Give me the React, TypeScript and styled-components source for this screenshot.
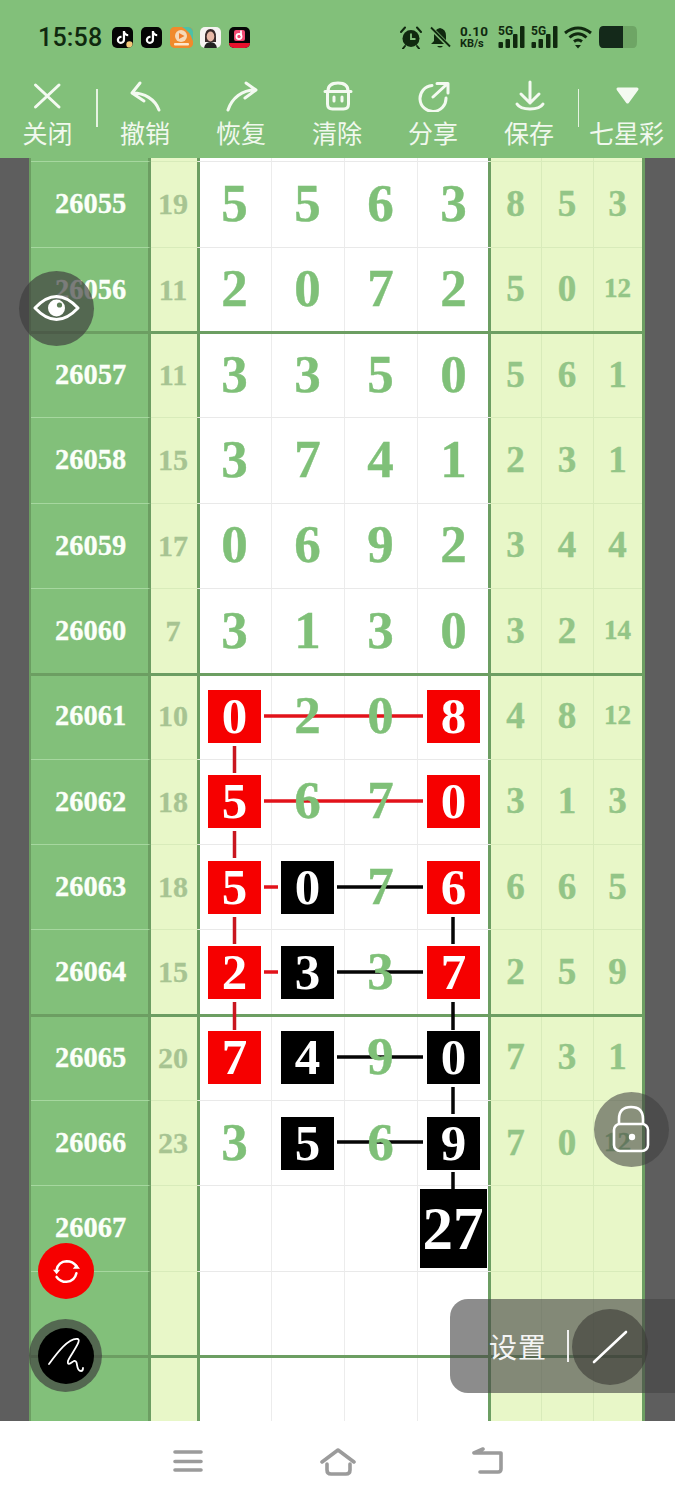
import React from "react";
import styled, { createGlobalStyle } from "styled-components";
import { FaTiktok } from "react-icons/fa6";

const GREEN = "#82c07a";
const RULE = "#6c9e62";
const PALE = "#e8f7c8";
const GRAY = "#5e5e5e";
const SERIF = `"Liberation Serif", "Times New Roman", serif`;
const CJK = `"Noto Sans CJK SC", "Noto Sans", sans-serif`;
const INK = "#10290f";

const Global = createGlobalStyle`
  html, body { margin: 0; padding: 0; background: #fff; }
  * { box-sizing: border-box; }
`;

const Page = styled.div`
  position: relative;
  width: 675px;
  height: 1500px;
  overflow: hidden;
  display: flex;
  flex-direction: column;
  background: #fff;
`;

const Header = styled.header`
  height: 158px;
  background: ${GREEN};
  display: flex;
  flex-direction: column;
`;

const StatusBar = styled.div`
  height: 72px;
  padding: 2px 37px 0 38px;
  display: flex;
  align-items: center;
`;

const Clock = styled.span`
  font: 500 25px/1 Roboto, sans-serif;
  color: ${INK};
  width: 74px;
  letter-spacing: 0.2px;
`;

const AppIcons = styled.div`
  display: flex;
  gap: 8px;
`;

const AppIcon = styled.div<{ $bg: string; $wide?: boolean }>`
  position: relative;
  width: ${(p) => (p.$wide ? 23 : 21)}px;
  height: 21px;
  margin-right: ${(p) => (p.$wide ? -1 : 0)}px;
  border-radius: 5px;
  background: ${(p) => p.$bg};
  display: flex;
  align-items: center;
  justify-content: center;
  overflow: hidden;
  color: #fff;
  font-size: 13px;
`;

const Indicators = styled.div`
  margin-left: auto;
  display: flex;
  align-items: center;
  color: ${INK};
`;

const Speed = styled.div`
  width: 27px;
  margin: 0 11px 0 9px;
  display: flex;
  flex-direction: column;
  font-family: Roboto, sans-serif;
  font-weight: 700;
  white-space: nowrap;
`;

const SpeedValue = styled.span`
  font-size: 13.5px;
  line-height: 13px;
  letter-spacing: 0.3px;
`;

const SpeedUnit = styled.span`
  font-size: 11px;
  line-height: 11px;
`;

const Toolbar = styled.nav`
  height: 86px;
  display: grid;
  grid-template-columns: 96px 1.5px 96px 96px 96px 96px 96px 1.5px 1fr;
  padding-top: 8px;
`;

const ToolItem = styled.div`
  display: flex;
  flex-direction: column;
  align-items: center;
  color: #f1f8ee;
`;

const ToolIcon = styled.svg`
  width: 36px;
  height: 32px;
  fill: none;
  stroke: #f4faf1;
  stroke-width: 3;
  stroke-linecap: round;
  stroke-linejoin: round;
`;

const ToolLabel = styled.span`
  margin-top: 5px;
  margin-right: 1px;
  font: 400 25px/30px ${CJK};
  white-space: nowrap;
`;

const ToolDivider = styled.div`
  width: 1.5px;
  height: 38px;
  margin-top: 9px;
  background: #e6f3e2;
`;

const Board = styled.main`
  height: 1263px;
  display: flex;
  background: ${GRAY};
`;

const Gutter = styled.div<{ $w: number }>`
  width: ${(p) => p.$w}px;
  flex: none;
`;

const Table = styled.div`
  position: relative;
  isolation: isolate;
  width: 616px;
  flex: none;
  overflow: hidden;
  border-left: 2px solid ${RULE};
  border-right: 3px solid ${RULE};
  background: #fff;
`;

const Row = styled.div<{ $h: number; $group?: boolean }>`
  position: relative;
  height: ${(p) => p.$h}px;
  display: grid;
  grid-template-columns: 120px 47px repeat(4, 73px) 51px 52px 49px;
  ${(p) =>
    p.$group &&
    `&::after {
      content: "";
      position: absolute;
      left: 0;
      right: 0;
      bottom: -1.5px;
      height: 3px;
      background: ${RULE};
      z-index: 1;
    }`}
`;

const Cell = styled.div`
  display: flex;
  align-items: center;
  justify-content: center;
  overflow: visible;
  font-family: ${SERIF};
  font-weight: 700;
  line-height: 1;
`;

const IssueCell = styled(Cell)`
  background: ${GREEN};
  border-bottom: 1px solid #a6d79f;
  border-right: 3px solid ${RULE};
  color: #fbfff9;
  font-size: 28.5px;
  padding-left: 2px;
  -webkit-text-stroke: 0.3px #fbfff9;
`;

const SumCell = styled(Cell)`
  background: ${PALE};
  border-bottom: 1px solid #d8ebba;
  box-shadow: inset -1px 0 0 ${RULE};
  color: #a7c492;
  font-size: 30px;
  padding-right: 3px;
  -webkit-text-stroke: 0.3px #a7c492;
`;

const DigitCell = styled(Cell)<{ $edge?: "first" | "last" }>`
  border-bottom: 1px solid #e9e9e9;
  border-left: ${(p) => (p.$edge === "first" ? "none" : "1px solid #ececec")};
  padding-right: ${(p) => (p.$edge === "first" ? 0 : 1)}px;
  box-shadow: ${(p) =>
    p.$edge === "first"
      ? `inset 2px 0 0 ${RULE}`
      : p.$edge === "last"
      ? `inset -2px 0 0 ${RULE}`
      : "none"};
  color: #7fc078;
  font-size: 53px;
`;

const SideCell = styled(Cell)<{ $first?: boolean; $small?: boolean }>`
  background: ${PALE};
  border-bottom: 1px solid #d8ebba;
  border-left: ${(p) => (p.$first ? "none" : "1px solid #d8ebba")};
  padding-right: ${(p) => (p.$first ? 0 : 1)}px;
  box-shadow: ${(p) => (p.$first ? `inset 1px 0 0 ${RULE}` : "none")};
  color: #93c587;
  font-size: ${(p) => (p.$small ? 27 : 37)}px;
`;

const Digit = styled.span`
  position: relative;
  z-index: 2;
  margin-bottom: 2px;
  -webkit-text-stroke: 0.4px currentColor;
`;

const Badge = styled.span<{ $tone: "red" | "black"; $big?: boolean }>`
  position: relative;
  z-index: 2;
  width: ${(p) => (p.$big ? 67 : 53)}px;
  height: ${(p) => (p.$big ? 79 : 53)}px;
  margin-right: ${(p) => (p.$big ? 1 : 0)}px;
  display: flex;
  align-items: center;
  justify-content: center;
  background: ${(p) => (p.$tone === "red" ? "#f60000" : "#000")};
  color: #fff;
  font-size: ${(p) => (p.$big ? 61 : 51)}px;
`;

const Connectors = styled.svg`
  position: absolute;
  left: -2px;
  top: 0;
  width: 616px;
  height: 1263px;
  z-index: 1;
`;

const NavBar = styled.footer`
  flex: 1;
  display: flex;
  align-items: center;
  justify-content: center;
  gap: 116px;
  padding-left: 2px;
  background: #fff;
`;

const NavIcon = styled.svg<{ $left?: number }>`
  margin-left: ${(p) => p.$left ?? 0}px;
  fill: none;
  stroke: #9b9b9b;
  stroke-width: 3.6;
  stroke-linecap: round;
  stroke-linejoin: round;
`;

const RoundButton = styled.div<{ $x: number; $y: number; $d: number; $bg: string }>`
  position: absolute;
  left: ${(p) => p.$x - p.$d / 2}px;
  top: ${(p) => p.$y - p.$d / 2}px;
  width: ${(p) => p.$d}px;
  height: ${(p) => p.$d}px;
  border-radius: 50%;
  background: ${(p) => p.$bg};
  display: flex;
  align-items: center;
  justify-content: center;
  z-index: 5;
`;

const InnerDisc = styled.div`
  width: 56px;
  height: 56px;
  border-radius: 50%;
  background: #000;
  display: flex;
  align-items: center;
  justify-content: center;
`;

const SettingsPanel = styled.div`
  position: absolute;
  left: 450px;
  top: 1299px;
  width: 225px;
  height: 94px;
  padding-left: 39px;
  border-radius: 18px 0 0 18px;
  background: rgba(70, 70, 70, 0.62);
  display: flex;
  align-items: center;
  z-index: 5;
`;

const SettingsLabel = styled.span`
  font: 400 28px/1 ${CJK};
  color: #f4f4f4;
  white-space: nowrap;
  letter-spacing: 1px;
`;

const SettingsDivider = styled.div`
  width: 2px;
  height: 32px;
  margin-left: 20px;
  background: #f0f0f0;
`;

const PenDisc = styled.div`
  width: 76px;
  height: 76px;
  margin-left: 3px;
  margin-top: 2px;
  border-radius: 50%;
  background: rgba(60, 60, 55, 0.62);
  display: flex;
  align-items: center;
  justify-content: center;
`;

type Mark = "r" | "b" | undefined;
type RowData = {
  issue: string;
  sum: string;
  digits: string[];
  marks?: Mark[];
  side: string[];
  group?: boolean;
};

const ROWS: RowData[] = [
  { issue: "26055", sum: "19", digits: ["5", "5", "6", "3"], side: ["8", "5", "3"] },
  { issue: "26056", sum: "11", digits: ["2", "0", "7", "2"], side: ["5", "0", "12"], group: true },
  { issue: "26057", sum: "11", digits: ["3", "3", "5", "0"], side: ["5", "6", "1"] },
  { issue: "26058", sum: "15", digits: ["3", "7", "4", "1"], side: ["2", "3", "1"] },
  { issue: "26059", sum: "17", digits: ["0", "6", "9", "2"], side: ["3", "4", "4"] },
  { issue: "26060", sum: "7", digits: ["3", "1", "3", "0"], side: ["3", "2", "14"], group: true },
  { issue: "26061", sum: "10", digits: ["0", "2", "0", "8"], marks: ["r", , , "r"], side: ["4", "8", "12"] },
  { issue: "26062", sum: "18", digits: ["5", "6", "7", "0"], marks: ["r", , , "r"], side: ["3", "1", "3"] },
  { issue: "26063", sum: "18", digits: ["5", "0", "7", "6"], marks: ["r", "b", , "r"], side: ["6", "6", "5"] },
  { issue: "26064", sum: "15", digits: ["2", "3", "3", "7"], marks: ["r", "b", , "r"], side: ["2", "5", "9"], group: true },
  { issue: "26065", sum: "20", digits: ["7", "4", "9", "0"], marks: ["r", "b", , "b"], side: ["7", "3", "1"] },
  { issue: "26066", sum: "23", digits: ["3", "5", "6", "9"], marks: [, "b", , "b"], side: ["7", "0", "12"] },
];

const RED_LINES = [
  [264, 716, 423, 716],
  [264, 801, 423, 801],
  [264, 887, 278, 887],
  [264, 972, 278, 972],
  [234.5, 746, 234.5, 773],
  [234.5, 831, 234.5, 858],
  [234.5, 917, 234.5, 944],
  [234.5, 1002, 234.5, 1030],
];

const BLACK_LINES = [
  [337, 887, 423, 887],
  [337, 972, 423, 972],
  [337, 1057, 423, 1057],
  [337, 1142, 423, 1142],
  [453, 917, 453, 944],
  [453, 1002, 453, 1030],
  [453, 1087, 453, 1114],
  [453, 1172, 453, 1190],
];

const EDGE = (i: number) => (i === 0 ? "first" : i === 3 ? "last" : undefined);

function BlankRow({ h, group }: { h: number; group?: boolean }) {
  return (
    <Row $h={h} $group={group}>
      <IssueCell />
      <SumCell />
      {[0, 1, 2, 3].map((i) => (
        <DigitCell key={i} $edge={EDGE(i)} />
      ))}
      <SideCell $first />
      <SideCell />
      <SideCell />
    </Row>
  );
}

const CornerDot = styled.svg`
  position: absolute;
  right: 0;
  bottom: 0;
`;

function TikTokApp({ small }: { small?: boolean }) {
  return (
    <AppIcon $bg="#050505">
      <FaTiktok />
      {small ? (
        <CornerDot width="7" height="7" viewBox="0 0 7 7">
          <circle cx="3.5" cy="3.5" r="3.2" fill="#f2c879" />
        </CornerDot>
      ) : null}
    </AppIcon>
  );
}

function Signal() {
  return (
    <svg width="27" height="24" viewBox="0 0 27 24" fill="currentColor">
      <text x="0" y="10" fontFamily="Roboto, sans-serif" fontWeight="700" fontSize="12">
        5G
      </text>
      <rect x="0.5" y="17" width="4.5" height="6" rx="1" />
      <rect x="7.5" y="14" width="4.5" height="9" rx="1" />
      <rect x="15" y="9" width="4.5" height="14" rx="1" />
      <rect x="22" y="1" width="4.5" height="22" rx="1" />
    </svg>
  );
}

const SignalGap = styled.span`
  width: 6px;
`;

const StatusGlyph = styled.svg<{ $left?: number }>`
  margin-left: ${(p) => p.$left ?? 0}px;
`;

export default function App() {
  return (
    <Page>
      <Global />
      <Header>
        <StatusBar>
          <Clock>15:58</Clock>
          <AppIcons>
            <TikTokApp small />
            <TikTokApp />
            <AppIcon $bg="#f0822a" $wide>
              <svg width="23" height="21" viewBox="0 0 23 21">
                <rect width="23" height="21" fill="#f08a2c" />
                <path d="M12 0H23V14Q20 4 12 0Z" fill="#4cc0a8" />
                <circle cx="11" cy="9" r="6" fill="#f6d9b8" />
                <path d="M9 6L14.5 9L9 12Z" fill="#ef7d2a" />
                <rect x="4" y="16" width="15" height="2.5" rx="1" fill="#fde6cc" />
              </svg>
            </AppIcon>
            <AppIcon $bg="#f6f3f2">
              <svg width="21" height="21" viewBox="0 0 21 21">
                <path d="M5 10Q5 2 10.5 2T16 10V15H5Z" fill="#3a2b2b" />
                <ellipse cx="10.5" cy="9.5" rx="3.8" ry="5" fill="#e8b9a8" />
                <path d="M4 21Q5 15 10.5 15T17 21Z" fill="#222" />
              </svg>
            </AppIcon>
            <AppIcon $bg="#060606">
              <svg width="21" height="21" viewBox="0 0 21 21">
                <rect x="5" y="3" width="11" height="11" rx="2" fill="#f14a72" />
                <circle cx="10" cy="9.5" r="2.6" fill="none" stroke="#fff" strokeWidth="1.7" />
                <path d="M12 3.5V9" stroke="#fff" strokeWidth="1.7" />
                <rect y="16" width="21" height="5" fill="#e8112d" />
              </svg>
            </AppIcon>
          </AppIcons>
          <Indicators>
            <StatusGlyph width="22" height="23" viewBox="0 0 22 23" fill="currentColor">
              <circle cx="11" cy="12.5" r="8.5" />
              <path d="M1 6L5 1.5M21 6L17 1.5M5 20L3 22.5M17 20L19 22.5" stroke="currentColor" strokeWidth="2" strokeLinecap="round" />
              <path d="M11 7.5V13H15.5" stroke="#82c07a" strokeWidth="1.8" fill="none" />
            </StatusGlyph>
            <StatusGlyph $left={7} width="22" height="23" viewBox="0 0 22 23" fill="currentColor">
              <path d="M11 2Q17 3 17 10V15L20 18H2L5 15V10Q5 3 11 2Z" />
              <path d="M8 20Q11 23 14 20Z" />
              <path d="M2 2L21 21" stroke="#82c07a" strokeWidth="4" />
              <path d="M2 1.5L21 20.5" stroke="currentColor" strokeWidth="1.8" />
            </StatusGlyph>
            <Speed>
              <SpeedValue>0.10</SpeedValue>
              <SpeedUnit>KB/s</SpeedUnit>
            </Speed>
            <Signal />
            <SignalGap />
            <Signal />
            <StatusGlyph $left={6} width="28" height="24" viewBox="0 0 28 24" fill="none" stroke="currentColor" strokeWidth="3">
              <path d="M1 8Q14 -2 27 8" />
              <path d="M5.5 12.5Q14 5 22.5 12.5" />
              <path d="M10 16.5Q14 13.5 18 16.5" />
              <path d="M11 20H17L14 23.5Z" fill="currentColor" stroke="none" />
            </StatusGlyph>
            <StatusGlyph $left={6} width="40" height="24" viewBox="0 0 40 24">
              <path d="M5 1H35Q39 1 39 7V17Q39 23 35 23H5Q1 23 1 17V7Q1 1 5 1Z" fill="#6ea565" />
              <path d="M5 1H25V23H5Q1 23 1 17V7Q1 1 5 1Z" fill="#14291a" />
            </StatusGlyph>
          </Indicators>
        </StatusBar>
        <Toolbar>
          <ToolItem>
            <ToolIcon viewBox="0 0 36 32">
              <path d="M5.5 5L29 27M29 5L5.5 27" />
            </ToolIcon>
            <ToolLabel>关闭</ToolLabel>
          </ToolItem>
          <ToolDivider />
          <ToolItem>
            <ToolIcon viewBox="0 0 36 32">
              <path d="M12 3L4 13L16 21M5 13C16 13 27 19 31 30" />
            </ToolIcon>
            <ToolLabel>撤销</ToolLabel>
          </ToolItem>
          <ToolItem>
            <ToolIcon viewBox="0 0 36 32">
              <path d="M22 3L32 10L21 18M31 10C18 10 8 18 4 30" />
            </ToolIcon>
            <ToolLabel>恢复</ToolLabel>
          </ToolItem>
          <ToolItem>
            <ToolIcon viewBox="0 0 36 32">
              <path d="M8 11C8 5 12 3 18 3C24 3 28 5 28 11M5 11.5H31M7.5 11.5V24Q7.5 29 12.5 29H23.5Q28.5 29 28.5 24V11.5M14 17V21M22 17V21" />
            </ToolIcon>
            <ToolLabel>清除</ToolLabel>
          </ToolItem>
          <ToolItem>
            <ToolIcon viewBox="0 0 36 32">
              <path d="M16 5.5A13 13 0 1 0 30 18M17 17L30 5M21 3.5H32V13" />
            </ToolIcon>
            <ToolLabel>分享</ToolLabel>
          </ToolItem>
          <ToolItem>
            <ToolIcon viewBox="0 0 36 32">
              <path d="M18 2V23M9 14L18 23L27 14M5 24Q8 29 18 29Q28 29 31 24" />
            </ToolIcon>
            <ToolLabel>保存</ToolLabel>
          </ToolItem>
          <ToolDivider />
          <ToolItem>
            <ToolIcon viewBox="0 0 36 32">
              <path d="M9 9H28L18.5 22Z" fill="#f4faf1" />
            </ToolIcon>
            <ToolLabel>七星彩</ToolLabel>
          </ToolItem>
        </Toolbar>
      </Header>

      <Board>
        <Gutter $w={29} />
        <Table>
          <BlankRow h={4.33} />
          {ROWS.map((r) => (
            <Row key={r.issue} $h={85.33} $group={r.group}>
              <IssueCell>{r.issue}</IssueCell>
              <SumCell>{r.sum}</SumCell>
              {r.digits.map((d, i) => {
                const m = r.marks?.[i];
                return (
                  <DigitCell key={i} $edge={EDGE(i)}>
                    {m ? <Badge $tone={m === "r" ? "red" : "black"}>{d}</Badge> : <Digit>{d}</Digit>}
                  </DigitCell>
                );
              })}
              {r.side.map((s, i) => (
                <SideCell key={i} $first={i === 0} $small={s.length > 1}>
                  <Digit>{s}</Digit>
                </SideCell>
              ))}
            </Row>
          ))}
          <Row $h={85.33}>
            <IssueCell>26067</IssueCell>
            <SumCell />
            {[0, 1, 2, 3].map((i) => (
              <DigitCell key={i} $edge={EDGE(i)}>
                {i === 3 ? (
                  <Badge $tone="black" $big>
                    27
                  </Badge>
                ) : null}
              </DigitCell>
            ))}
            <SideCell $first />
            <SideCell />
            <SideCell />
          </Row>
          <BlankRow h={85.33} group />
          <BlankRow h={66} />
          <Connectors viewBox="29 158 616 1263">
            {RED_LINES.map((l, i) => (
              <line key={i} x1={l[0]} y1={l[1]} x2={l[2]} y2={l[3]} stroke={l[0] === l[2] ? "#c9161f" : "#e2121a"} strokeWidth="3.5" />
            ))}
            {BLACK_LINES.map((l, i) => (
              <line key={i} x1={l[0]} y1={l[1]} x2={l[2]} y2={l[3]} stroke="#050505" strokeWidth="3.5" />
            ))}
          </Connectors>
        </Table>
        <Gutter $w={30} />
      </Board>

      <NavBar>
        <NavIcon width="30" height="24" viewBox="0 0 30 24">
          <path d="M2 3H28M2 12.5H28M2 21H28" />
        </NavIcon>
        <NavIcon $left={1} width="36" height="30" viewBox="0 0 36 30">
          <path d="M2 16L18 4L34 16M7 18V24Q7 28 11 28H26Q30 28 30 24V18" />
        </NavIcon>
        <NavIcon width="32" height="28" viewBox="0 0 32 28">
          <path d="M11 2L2 6H29V22Q29 25 26 25H8" />
        </NavIcon>
      </NavBar>

      <RoundButton $x={56} $y={308} $d={75} $bg="rgba(62,62,62,0.68)">
        <svg width="47" height="34" viewBox="0 0 47 34" fill="none">
          <path d="M2 17Q23.5 -6 45 17Q23.5 40 2 17Z" stroke="#fff" strokeWidth="3" strokeLinejoin="round" />
          <circle cx="23.5" cy="17" r="8.5" fill="#fff" />
          <circle cx="26.5" cy="14" r="2.6" fill="#5c7d57" />
        </svg>
      </RoundButton>
      <RoundButton $x={631} $y={1129} $d={75} $bg="rgba(62,62,62,0.56)">
        <svg width="38" height="48" viewBox="0 0 38 48" fill="none" stroke="#fff" strokeWidth="2.6">
          <path d="M7 20V14Q7 2 19 2T31 14V20" />
          <rect x="2" y="19" width="34" height="27" rx="6" />
          <circle cx="20" cy="32" r="3.2" fill="#fff" stroke="none" />
        </svg>
      </RoundButton>
      <RoundButton $x={66} $y={1271} $d={56} $bg="#f60000">
        <svg width="29" height="27" viewBox="0 0 32 30" fill="none" stroke="#fff" strokeWidth="2.8" strokeLinecap="round">
          <path d="M5 13Q7 4 16 3.5Q23 3.5 27 9" />
          <path d="M27 17Q25 26 16 26.5Q9 26.5 5 21" />
          <path d="M1 13H9L5 18Z" fill="#fff" stroke="none" />
          <path d="M23 12H31L27 7Z" fill="#fff" stroke="none" />
        </svg>
      </RoundButton>
      <RoundButton $x={65.5} $y={1355.5} $d={73} $bg="rgba(62,62,62,0.68)">
        <InnerDisc>
          <svg width="56" height="56" viewBox="0 0 56 56" fill="none" stroke="#fff" strokeWidth="1.8" strokeLinecap="round">
            <path d="M11 36C19 25 31 9 40 11C44 13 31 29 30 33C29 39 34 34 36 33C41 32 37 43 43 43C45 43 45 41 45 40" />
          </svg>
        </InnerDisc>
      </RoundButton>
      <SettingsPanel>
        <SettingsLabel>设置</SettingsLabel>
        <SettingsDivider />
        <PenDisc>
          <svg width="36" height="34" viewBox="0 0 36 34" fill="none" stroke="#fff" strokeWidth="2.6" strokeLinecap="round">
            <path d="M2 32L34 2" />
          </svg>
        </PenDisc>
      </SettingsPanel>
    </Page>
  );
}
